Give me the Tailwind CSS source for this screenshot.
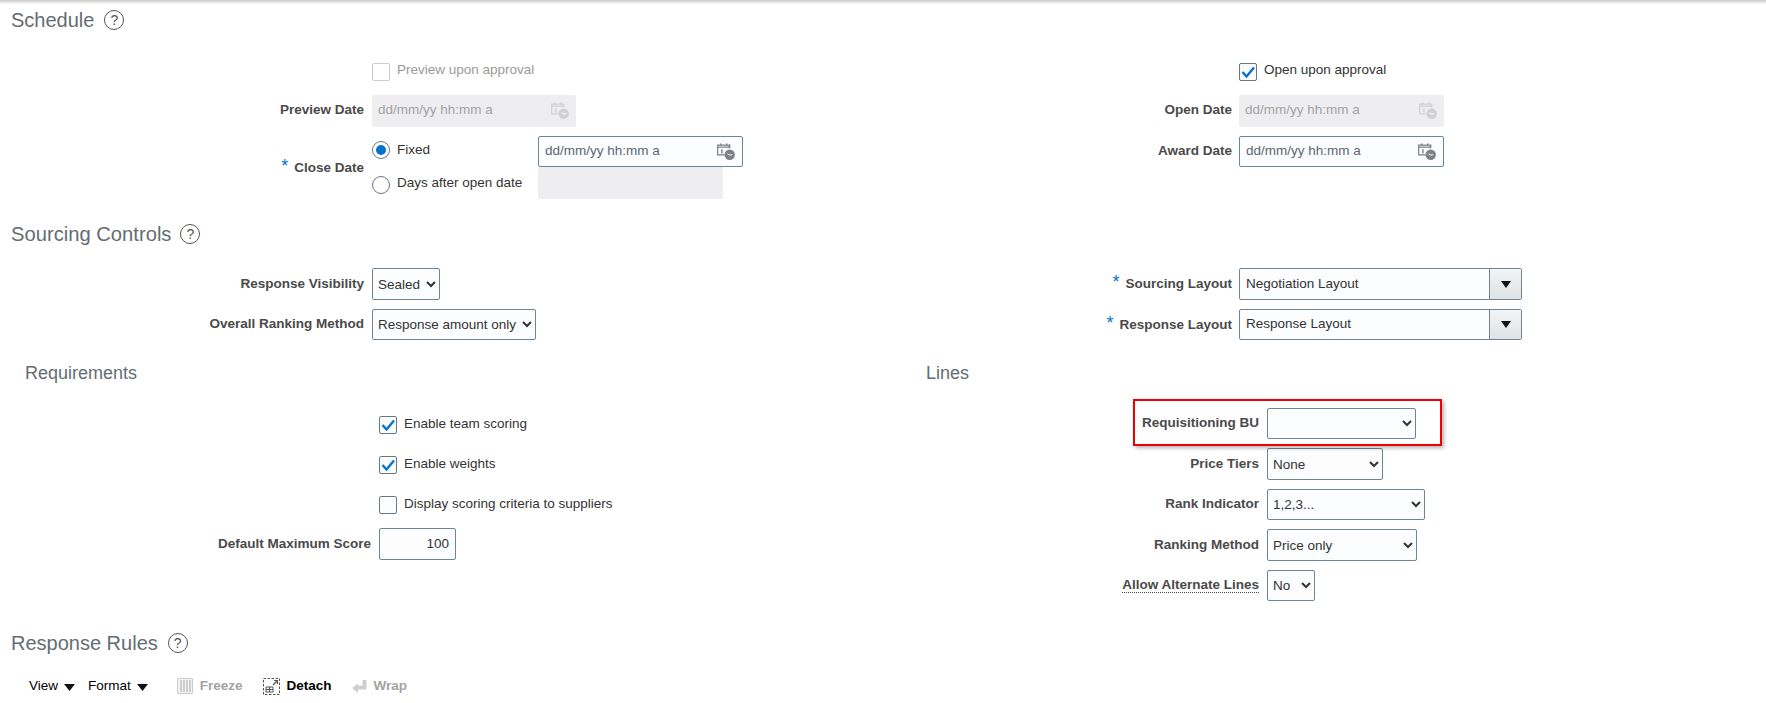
<!DOCTYPE html>
<html lang="en">
<head>
<meta charset="utf-8" />
<title>Negotiation Controls</title>
<script src="https://cdn.jsdelivr.net/npm/@tailwindcss/browser@4"></script>
</head>
<body class="bg-white h-[703px] overflow-hidden font-['Liberation_Sans',Arial,sans-serif] text-[13.5px] text-[#333]">
  <svg class="hidden">
    <symbol id="cal" viewBox="0 0 18 18">
      <path d="M3 1.5h1.5v2H3zM9 1.5h1.5v2H9z" fill="currentColor"/>
      <path d="M.7 3.2h12.1v2H.7zM.7 3.2v9.6h7" fill="none" stroke="currentColor" stroke-width="1.2"/>
      <path d="M12.3 3.2v3" fill="none" stroke="currentColor" stroke-width="1.2"/>
      <path d="M4.2 7.2h1.4v4.4H4.2z" fill="currentColor"/>
      <circle cx="12.7" cy="12.7" r="5.2" fill="currentColor"/>
      <path d="M10.4 11.8l2.6 1.4 2.2-.6" fill="none" stroke="#fff" stroke-width="1"/>
    </symbol>
  </svg>

  <div class="h-[4px] bg-gradient-to-b from-[#c9c9c9] to-white"></div>

  <!-- Schedule -->
  <div class="h-[32px] pl-[11px] flex items-center gap-[10px]">
    <h2 class="text-[20px] text-[#646d73]">Schedule</h2>
    <span class="w-[20px] h-[20px] rounded-full border border-[#555] text-[#555] text-[14px] flex items-center justify-center">?</span>
  </div>
  <div class="mt-[27px] grid grid-cols-[867px_1fr]">
    <div class="flex flex-col">
      <div class="ml-[372px] h-[18px] flex items-center gap-[7px] text-[#9a9a9a]">
        <span class="w-[18px] h-[18px] rounded-[2px] border border-[#c8cdd1] bg-white"></span>
        <span class="mb-[3px]">Preview upon approval</span>
      </div>
      <div class="mt-[14px] flex items-center">
        <label class="w-[364px] text-right font-bold text-[#4a4a4a] mb-[1px]">Preview Date</label>
        <div class="ml-[8px] w-[204px] h-[32px] rounded-[2px] bg-[#eeeef0] pl-[6px] pr-[7px] flex items-center justify-between text-[#a3a3a3]">
          <span class="mb-[1px]">dd/mm/yy hh:mm a</span>
          <svg class="w-[18px] h-[18px] mb-[2px] text-[#cfd1d3]"><use href="#cal"/></svg>
        </div>
      </div>
      <div class="mt-[9px] flex items-center h-[63px]">
        <label class="w-[364px] text-right font-bold text-[#4a4a4a]"><span class="text-[#0572ce] text-[18px] font-normal leading-none mr-[6px]">*</span>Close Date</label>
        <div class="ml-[8px] w-[166px] flex flex-col gap-[13px] pt-[1px]">
          <div class="flex items-center gap-[7px]">
            <span class="w-[18px] h-[18px] rounded-full border border-[#64788a] flex items-center justify-center"><span class="w-[10px] h-[10px] rounded-full bg-[#0572ce]"></span></span>
            <span>Fixed</span>
          </div>
          <div class="flex items-center gap-[7px]">
            <span class="w-[18px] h-[18px] rounded-full border border-[#64788a]"></span>
            <span class="mb-[3px]">Days after open date</span>
          </div>
        </div>
        <div class="flex flex-col">
          <div class="w-[205px] h-[31px] rounded-[2px] border border-[#6f8594] bg-[#fbfdff] pl-[6px] pr-[7px] flex items-center justify-between text-[#5c6670]">
            <span>dd/mm/yy hh:mm a</span>
            <svg class="w-[18px] h-[18px] mb-[2px] text-[#7b8186]"><use href="#cal"/></svg>
          </div>
          <div class="w-[185px] h-[32px] rounded-[2px] bg-[#eeeef0]"></div>
        </div>
      </div>
    </div>
    <div class="flex flex-col">
      <div class="ml-[372px] h-[18px] flex items-center gap-[7px]">
        <span class="w-[18px] h-[18px] rounded-[2px] border border-[#64788a] bg-[#fbfdff] flex items-center justify-center">
          <svg class="w-[14px] h-[14px]" viewBox="0 0 14 14"><path d="M1.5 7l4 4.5L13 2.5" fill="none" stroke="#0572ce" stroke-width="2.4"/></svg>
        </span>
        <span class="mb-[3px]">Open upon approval</span>
      </div>
      <div class="mt-[14px] flex items-center">
        <label class="w-[365px] text-right font-bold text-[#4a4a4a] mb-[1px]">Open Date</label>
        <div class="ml-[7px] w-[205px] h-[32px] rounded-[2px] bg-[#eeeef0] pl-[6px] pr-[7px] flex items-center justify-between text-[#a3a3a3]">
          <span class="mb-[1px]">dd/mm/yy hh:mm a</span>
          <svg class="w-[18px] h-[18px] mb-[2px] text-[#cfd1d3]"><use href="#cal"/></svg>
        </div>
      </div>
      <div class="mt-[9px] flex items-center">
        <label class="w-[365px] text-right font-bold text-[#4a4a4a]">Award Date</label>
        <div class="ml-[7px] w-[205px] h-[31px] rounded-[2px] border border-[#6f8594] bg-[#fbfdff] pl-[6px] pr-[7px] flex items-center justify-between text-[#5c6670]">
          <span>dd/mm/yy hh:mm a</span>
          <svg class="w-[18px] h-[18px] mb-[2px] text-[#7b8186]"><use href="#cal"/></svg>
        </div>
      </div>
    </div>
  </div>

  <!-- Sourcing Controls -->
  <div class="mt-[18px] h-[34px] pl-[11px] flex items-center gap-[9px]">
    <h2 class="text-[20.2px] text-[#646d73]">Sourcing Controls</h2>
    <span class="w-[20px] h-[20px] rounded-full border border-[#555] text-[#555] text-[14px] flex items-center justify-center">?</span>
  </div>
  <div class="mt-[17px] grid grid-cols-[867px_1fr]">
    <div class="flex flex-col gap-[9px]">
      <div class="flex items-center">
        <label class="w-[364px] text-right font-bold text-[#4a4a4a]">Response Visibility</label>
        <select class="ml-[8px] w-[68px] h-[32px] pl-[1px] rounded-[2px] border border-[#6f8594] bg-[#fbfdff]"><option>Sealed</option></select>
      </div>
      <div class="flex items-center">
        <label class="w-[364px] text-right font-bold text-[#4a4a4a]">Overall Ranking Method</label>
        <select class="ml-[8px] w-[164px] h-[31px] pl-[1px] rounded-[2px] border border-[#6f8594] bg-[#fbfdff]"><option>Response amount only</option></select>
      </div>
    </div>
    <div class="flex flex-col gap-[9px]">
      <div class="flex items-center">
        <label class="w-[365px] text-right font-bold text-[#4a4a4a]"><span class="text-[#0572ce] text-[18px] font-normal leading-none mr-[6px]">*</span>Sourcing Layout</label>
        <div class="ml-[7px] w-[283px] h-[32px] rounded-[2px] border border-[#6f8594] bg-[#fbfdff] flex items-stretch">
          <span class="flex-1 pl-[6px] flex items-center">Negotiation Layout</span>
          <span class="w-[32px] border-l border-[#6f8594] bg-gradient-to-b from-[#f2f4f5] to-[#dfe3e6] flex items-center justify-center">
            <svg class="w-[10px] h-[7px]" viewBox="0 0 10 7"><path d="M0 0h10L5 7z" fill="#111"/></svg>
          </span>
        </div>
      </div>
      <div class="flex items-center">
        <label class="w-[365px] text-right font-bold text-[#4a4a4a]"><span class="text-[#0572ce] text-[18px] font-normal leading-none mr-[6px]">*</span>Response Layout</label>
        <div class="ml-[7px] w-[283px] h-[31px] rounded-[2px] border border-[#6f8594] bg-[#fbfdff] flex items-stretch">
          <span class="flex-1 pl-[6px] flex items-center">Response Layout</span>
          <span class="w-[32px] border-l border-[#6f8594] bg-gradient-to-b from-[#f2f4f5] to-[#dfe3e6] flex items-center justify-center">
            <svg class="w-[10px] h-[7px]" viewBox="0 0 10 7"><path d="M0 0h10L5 7z" fill="#111"/></svg>
          </span>
        </div>
      </div>
    </div>
  </div>

  <!-- Requirements / Lines -->
  <div class="mt-[21px] grid grid-cols-[867px_1fr]">
    <div class="flex flex-col">
      <h3 class="h-[24px] pl-[25px] text-[18px] leading-[24px] text-[#646d73]">Requirements</h3>
      <div class="mt-[31px] ml-[379px] flex flex-col gap-[22px]">
        <div class="h-[18px] flex items-center gap-[7px]">
          <span class="w-[18px] h-[18px] rounded-[2px] border border-[#64788a] bg-[#fbfdff] flex items-center justify-center">
            <svg class="w-[14px] h-[14px]" viewBox="0 0 14 14"><path d="M1.5 7l4 4.5L13 2.5" fill="none" stroke="#0572ce" stroke-width="2.4"/></svg>
          </span>
          <span class="mb-[2px]">Enable team scoring</span>
        </div>
        <div class="h-[18px] flex items-center gap-[7px]">
          <span class="w-[18px] h-[18px] rounded-[2px] border border-[#64788a] bg-[#fbfdff] flex items-center justify-center">
            <svg class="w-[14px] h-[14px]" viewBox="0 0 14 14"><path d="M1.5 7l4 4.5L13 2.5" fill="none" stroke="#0572ce" stroke-width="2.4"/></svg>
          </span>
          <span class="mb-[2px]">Enable weights</span>
        </div>
        <div class="h-[18px] flex items-center gap-[7px]">
          <span class="w-[18px] h-[18px] rounded-[2px] border border-[#64788a] bg-[#fbfdff]"></span>
          <span class="mb-[1px]">Display scoring criteria to suppliers</span>
        </div>
      </div>
      <div class="mt-[14px] flex items-center">
        <label class="w-[371px] text-right font-bold text-[#4a4a4a] mt-[1px]">Default Maximum Score</label>
        <div class="ml-[8px] w-[77px] h-[32px] rounded-[2px] border border-[#6f8594] bg-[#fbfdff] pr-[6px] flex items-center justify-end">100</div>
      </div>
    </div>
    <div class="flex flex-col">
      <h3 class="h-[24px] pl-[59px] text-[18px] leading-[24px] text-[#646d73]">Lines</h3>
      <div class="mt-[23px] flex flex-col gap-[9px]">
        <div class="relative flex items-center">
          <label class="w-[392px] text-right font-bold text-[#4a4a4a]">Requisitioning BU</label>
          <select class="ml-[8px] w-[149px] h-[31px] pl-[1px] rounded-[2px] border border-[#6f8594] bg-[#fbfdff]"><option></option></select>
          <div class="absolute left-[266px] top-[-9px] w-[309px] h-[47px] border-2 border-[#f00000] shadow-[2px_2px_4px_rgba(0,0,0,0.3)] pointer-events-none"></div>
        </div>
        <div class="flex items-center">
          <label class="w-[392px] text-right font-bold text-[#4a4a4a]">Price Tiers</label>
          <select class="ml-[8px] w-[116px] h-[32px] pl-[1px] rounded-[2px] border border-[#6f8594] bg-[#fbfdff]"><option>None</option></select>
        </div>
        <div class="flex items-center">
          <label class="w-[392px] text-right font-bold text-[#4a4a4a]">Rank Indicator</label>
          <select class="ml-[8px] w-[158px] h-[31px] pl-[1px] rounded-[2px] border border-[#6f8594] bg-[#fbfdff]"><option>1,2,3...</option></select>
        </div>
        <div class="flex items-center">
          <label class="w-[392px] text-right font-bold text-[#4a4a4a]">Ranking Method</label>
          <select class="ml-[8px] w-[150px] h-[32px] pl-[1px] rounded-[2px] border border-[#6f8594] bg-[#fbfdff]"><option>Price only</option></select>
        </div>
        <div class="flex items-center">
          <label class="w-[392px] text-right font-bold text-[#4a4a4a]"><span class="border-b border-dotted border-[#4a4a4a]">Allow Alternate Lines</span></label>
          <select class="ml-[8px] w-[48px] h-[31px] pl-[1px] rounded-[2px] border border-[#6f8594] bg-[#fbfdff]"><option>No</option></select>
        </div>
      </div>
    </div>
  </div>

  <!-- Response Rules -->
  <div class="mt-[25px] h-[34px] pl-[11px] flex items-center gap-[10px]">
    <h2 class="text-[20px] text-[#646d73]">Response Rules</h2>
    <span class="w-[20px] h-[20px] rounded-full border border-[#555] text-[#555] text-[14px] flex items-center justify-center">?</span>
  </div>
  <div class="mt-[14px] h-[24px] pl-[29px] flex items-center text-black">
    <span>View</span>
    <svg class="ml-[6px] mt-[2px] w-[11px] h-[7px]" viewBox="0 0 11 7"><path d="M0 0h11L5.5 7z" fill="#111"/></svg>
    <span class="ml-[13px]">Format</span>
    <svg class="ml-[6px] mt-[2px] w-[11px] h-[7px]" viewBox="0 0 11 7"><path d="M0 0h11L5.5 7z" fill="#111"/></svg>
    <svg class="ml-[29px] w-[16px] h-[16px]" viewBox="0 0 16 16">
      <path d="M.5.5h15v15H.5z" fill="#f4f4f4" stroke="#ccc"/>
      <path d="M4 2v12M7 2v12M10 2v12M13 2v12" stroke="#c4c4c4" stroke-width="1.6"/>
    </svg>
    <span class="ml-[7px] font-bold text-[#a3a3a3]">Freeze</span>
    <svg class="ml-[20px] w-[17px] h-[17px]" viewBox="0 0 17 17">
      <rect x=".5" y=".5" width="16" height="16" fill="none" stroke="#555" stroke-dasharray="2.5 1.5"/>
      <path d="M3 9h7v5H3z" fill="#fff" stroke="#555"/>
      <path d="M3 11.5h7M6.5 9v5" stroke="#555"/>
      <path d="M10 7l4-4M11 2.5h3.5V6" fill="none" stroke="#555" stroke-width="1.2"/>
    </svg>
    <span class="ml-[7px] font-bold">Detach</span>
    <svg class="ml-[20px] w-[15px] h-[15px]" viewBox="0 0 15 15"><path d="M10.5 1h4v9.5H6V14L0 9l6-4.5v2h4.5z" fill="#cfcfcf"/></svg>
    <span class="ml-[7px] font-bold text-[#a3a3a3]">Wrap</span>
  </div>
</body>
</html>
